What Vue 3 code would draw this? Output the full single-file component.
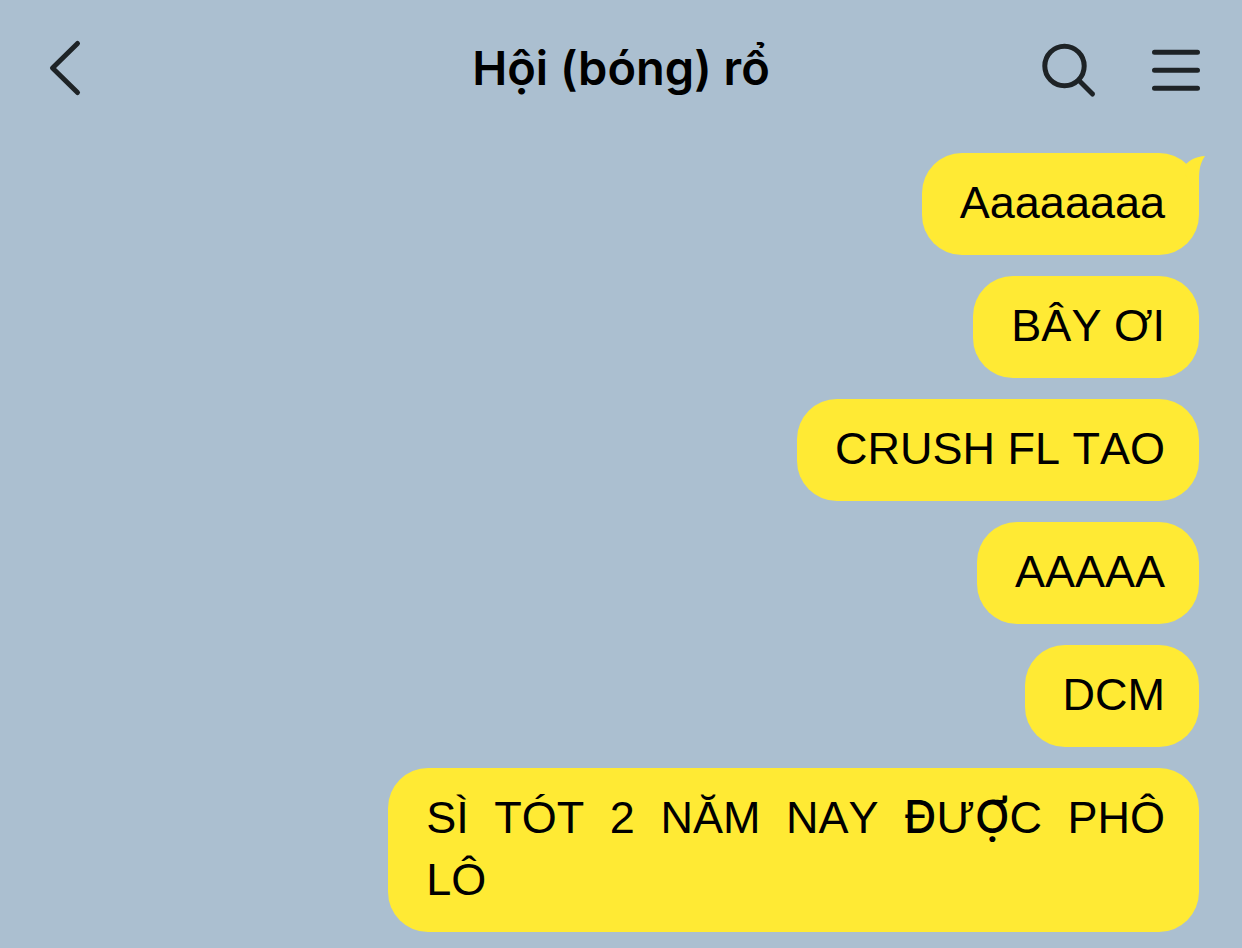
<script setup>
import { ref } from 'vue'

const title = ref('Hội (bóng) rổ')

// A message is a list of lines, a line a list of text runs; `strong` runs are drawn heavier.
const messages = [
  { id: 1, tail: true, lines: [[{ text: 'Aaaaaaaa' }]] },
  { id: 2, lines: [[{ text: 'BÂY ƠI' }]] },
  { id: 3, lines: [[{ text: 'CRUSH FL TAO' }]] },
  { id: 4, lines: [[{ text: 'AAAAA' }]] },
  { id: 5, lines: [[{ text: 'DCM' }]] },
  {
    id: 6,
    wide: true,
    lines: [
      [
        { text: 'SÌ TÓT 2 NĂM NAY ' },
        { text: 'Đ', strong: true },
        { text: 'Ư' },
        { text: 'Ợ', strong: true },
        { text: 'C PHÔ' },
      ],
      [{ text: 'LÔ' }],
    ],
  },
]
</script>

<template>
  <div class="chat">
    <header class="bar">
      <div class="side">
        <button class="icon-button" type="button" aria-label="Back">
          <svg width="42" height="60" viewBox="0 0 42 60" aria-hidden="true">
            <path d="M37.5 5.5 12.500 30 37.500 54.500" />
          </svg>
        </button>
      </div>
      <h1 class="title">{{ title }}</h1>
      <div class="side actions">
        <button class="icon-button" type="button" aria-label="Search">
          <svg width="56" height="60" viewBox="0 0 56 60" aria-hidden="true">
            <circle cx="23.500" cy="28" r="19.700" />
            <path d="M38 42.500 51.500 56" />
          </svg>
        </button>
        <button class="icon-button" type="button" aria-label="Menu">
          <svg width="50" height="60" viewBox="0 0 50 60" aria-hidden="true">
            <path d="M2.500 14.300H45.500M2.500 32.300H45.500M2.500 50.300H45.500" />
          </svg>
        </button>
      </div>
    </header>

    <main class="messages">
      <div v-for="message in messages" :key="message.id" class="bubble" :class="{ wide: message.wide }">
        <svg v-if="message.tail" class="tail" width="20" height="42" viewBox="0 0 20 42" aria-hidden="true">
          <path d="M0 11C5 6 11 2.500 20 2C16 8 14 14 14 24V42L0 20Z" />
        </svg>
        <p class="text">
          <span v-for="(line, row) in message.lines" :key="row" class="line"><span
            v-for="(run, index) in line"
            :key="index"
            :class="{ strong: run.strong }"
          >{{ run.text }}</span></span>
        </p>
      </div>
    </main>
  </div>
</template>

<style>
html,
body {
  background: #abbfd0;
}
</style>

<style scoped>
.chat {
  min-height: 100vh;
  box-sizing: border-box;
  background: #abbfd0;
  color: #000;
  font-family: "Liberation Sans", Arial, sans-serif;
}

.bar {
  display: grid;
  grid-template-columns: 1fr auto 1fr;
  align-items: center;
  padding: 38px 40px 0;
}

.side {
  display: flex;
  align-items: center;
}

.actions {
  justify-content: flex-end;
  gap: 55px;
}

.icon-button {
  display: flex;
  padding: 0;
  border: 0;
  background: none;
  cursor: pointer;
}

.icon-button svg {
  fill: none;
  stroke: #1e2326;
  stroke-width: 5;
  stroke-linecap: round;
  stroke-linejoin: round;
}

.title {
  margin: 0;
  font-family: Inter, sans-serif;
  font-size: 47px;
  font-weight: 600;
  line-height: 60px;
  white-space: nowrap;
}

.messages {
  display: flex;
  flex-direction: column;
  align-items: flex-end;
  gap: 21px;
  padding: 55px 43px 16px 24px;
}

.bubble {
  position: relative;
  box-sizing: border-box;
  max-width: 69%;
  padding: 19px 34px 21px 38px;
  border-radius: 40px;
  background: #ffea34;
}

.wide {
  width: 69%;
}

.tail {
  position: absolute;
  top: 1px;
  right: -6px;
  fill: #ffea34;
}

.text {
  margin: 0;
  font-size: 45px;
  font-kerning: none;
  line-height: 62px;
}

.line {
  display: block;
}

.line:not(:last-child) {
  text-align-last: justify;
}

.strong {
  font-family: Inter, sans-serif;
  font-weight: 500;
  line-height: 1;
}
</style>
